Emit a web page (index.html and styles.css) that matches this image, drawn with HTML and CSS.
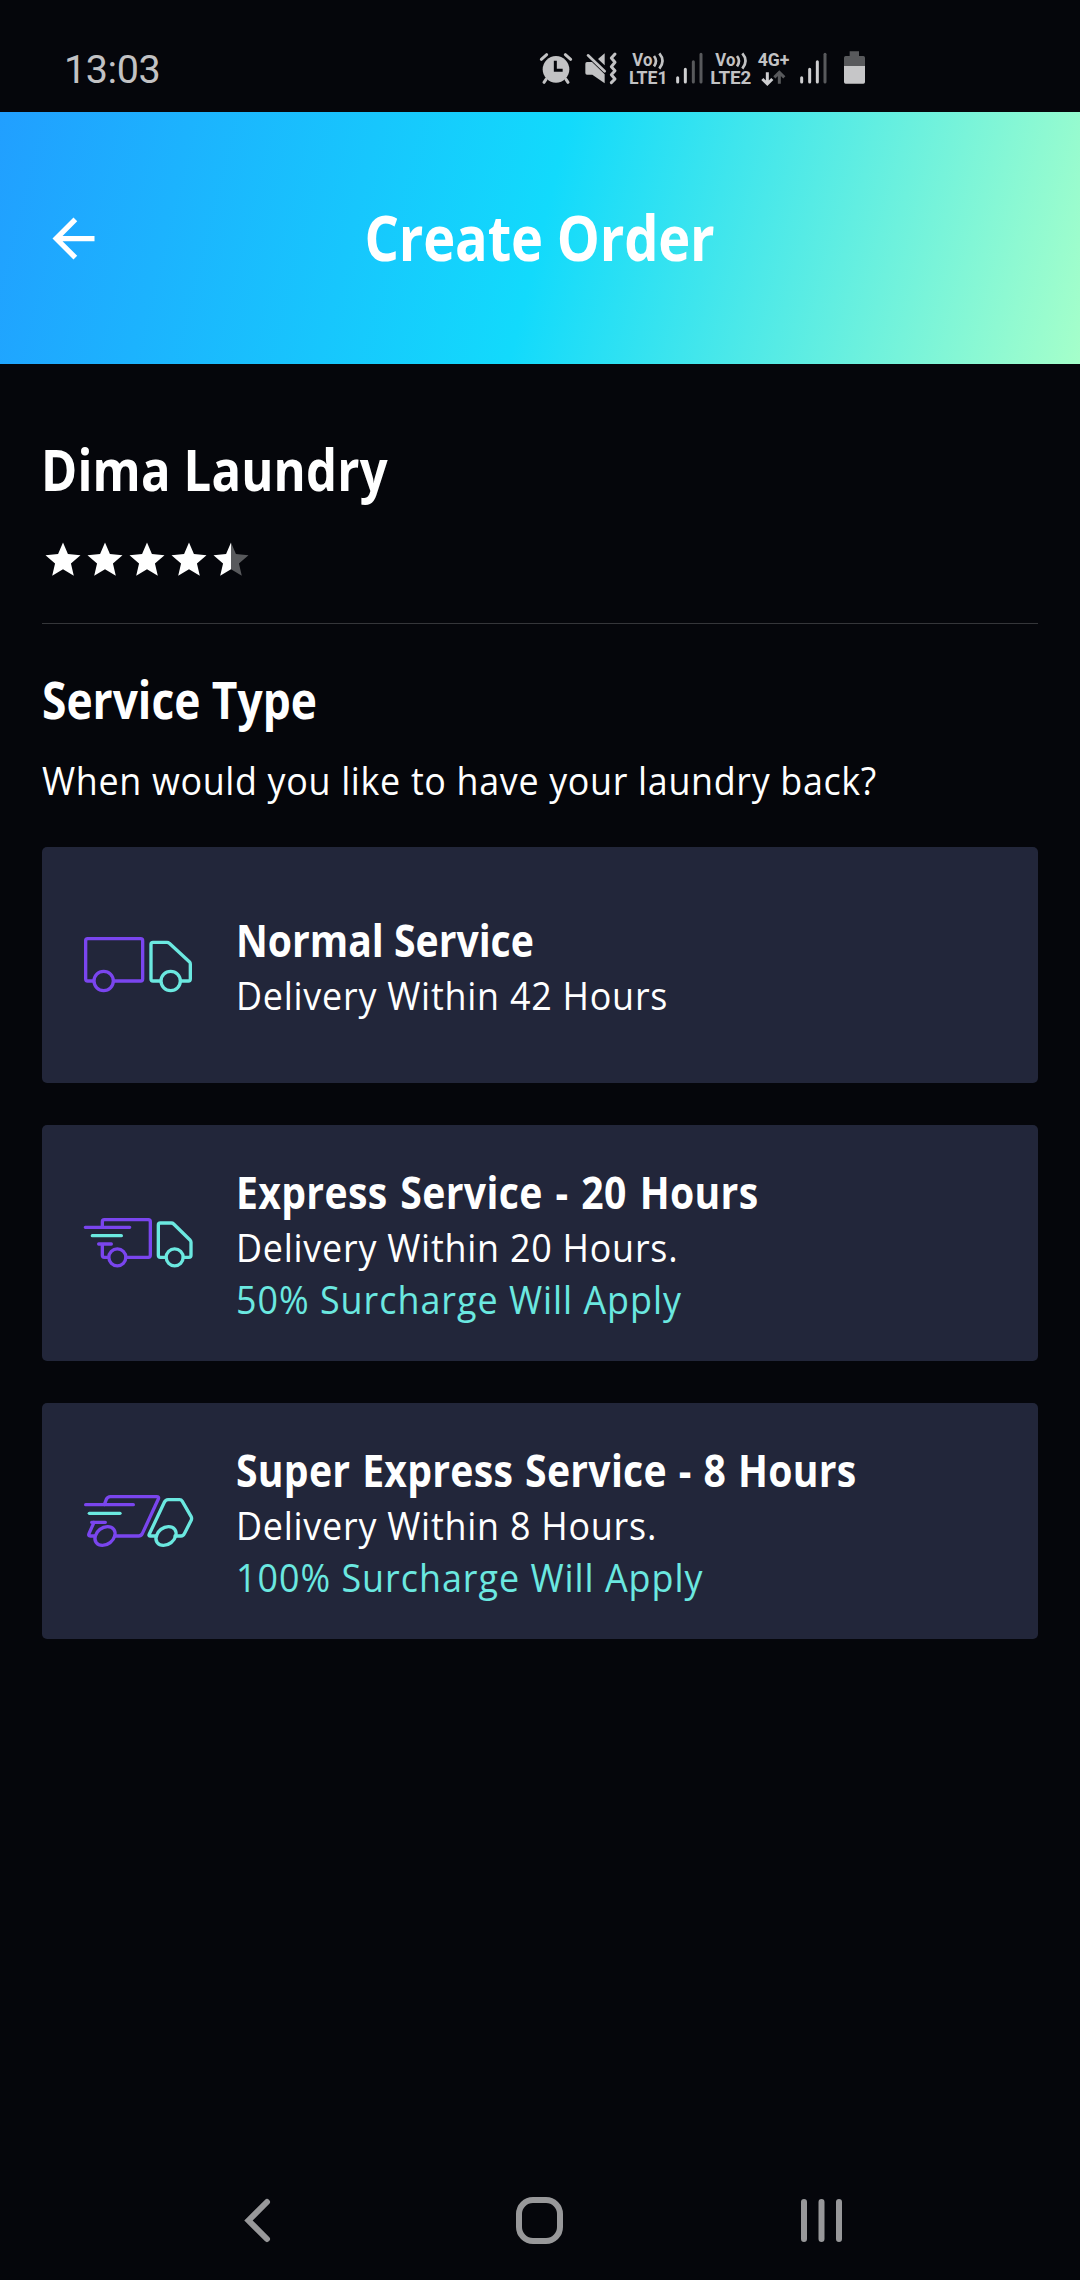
FILE: index.html
```html
<!DOCTYPE html>
<html lang="en">
<head>
<meta charset="utf-8">
<title>Create Order</title>
<link rel="stylesheet" href="styles.css">
</head>
<body>
<div class="screen">
  <div class="status-bar">
    <span class="clock">13:03</span>
    <svg class="status-icons" viewBox="0 0 1080 180">
      <!-- alarm -->
      <g fill="#c2c2c4" stroke="#c2c2c4" stroke-linecap="round">
        <circle cx="108" cy="88" r="40" stroke="none"/>
        <path d="M64 58 80 44M152 58 136 44" stroke-width="9"/>
        <path d="M78 118 72 127M138 118 144 127" stroke-width="9"/>
        <path d="M106 62V91H128" fill="none" stroke="#05060b" stroke-width="9" stroke-linecap="butt"/>
      </g>
      <!-- mute and vibrate -->
      <g fill="#c2c2c4">
        <path d="M201 66H216L254 103V130L217 104H201Q196 104 196 99V71Q196 66 201 66Z"/>
        <path d="M254 40V76L234 57Z"/>
        <path d="M204 46 254 94" stroke="#c2c2c4" stroke-width="8" stroke-linecap="round"/>
        <path d="M285 42 274 54 285 67 274 80 285 92 274 104 285 117 274 128" fill="none" stroke="#c2c2c4" stroke-width="9" stroke-linejoin="round" stroke-linecap="round"/>
      </g>
      <g class="net-label" fill="#c2c2c4">
        <text x="337" y="79" textLength="60" lengthAdjust="spacingAndGlyphs">Vo</text>
        <text x="327" y="131" textLength="116" lengthAdjust="spacingAndGlyphs">LTE1</text>
        <text x="586" y="79" textLength="60" lengthAdjust="spacingAndGlyphs">Vo</text>
        <text x="571" y="131" textLength="123" lengthAdjust="spacingAndGlyphs">LTE2</text>
        <text x="713" y="79" textLength="95" lengthAdjust="spacingAndGlyphs">4G+</text>
      </g>
      <g fill="none" stroke="#c2c2c4" stroke-width="8">
        <path d="M402 48Q414 63 402 79M418 40Q437 62 418 86"/>
        <path d="M651 48Q663 63 651 79M667 40Q686 62 667 86"/>
      </g>
      <!-- signal strength -->
      <g stroke-width="9" stroke-linecap="round" stroke="#cfcfd1">
        <path d="M473 113V126M496 88V126"/>
        <path d="M520 65V126M543 43V126" stroke="#58595c"/>
        <path d="M845 113V126M869 88V126M892 65V126"/>
        <path d="M915 43V126" stroke="#58595c"/>
      </g>
      <g fill="none" stroke-width="9">
        <path d="M778 131V98M763 112 778 97 793 112" stroke="#58595c"/>
        <path d="M742 97V131M727 117 742 132 757 117" stroke="#cfcfd1"/>
      </g>
      <!-- battery -->
      <path d="M989 34H1017V48H1030Q1035 48 1035 53V79H972V53Q972 48 977 48H989Z" fill="#58595c"/>
      <path d="M972 78H1035V126Q1035 131 1030 131H977Q972 131 972 126Z" fill="#c6c6c8"/>
    </svg>
  </div>

  <header class="app-bar">
    <svg class="back" viewBox="0 0 24 24"><path d="M20 11H7.83l5.59-5.59L12 4l-8 8 8 8 1.41-1.41L7.83 13H20v-2z" fill="#fff"/></svg>
    <h1 class="app-title"><span class="bold">Create Order</span></h1>
  </header>

  <main class="content">
    <h2 class="shop bold">Dima Laundry</h2>
    <div class="rating">
      <svg viewBox="0 0 24 24"><path d="M12 17.27 18.18 21l-1.64-7.03L22 9.24l-7.19-.61L12 2 9.19 8.63 2 9.24l5.46 4.73L5.82 21z"/></svg>
      <svg viewBox="0 0 24 24"><path d="M12 17.27 18.18 21l-1.64-7.03L22 9.24l-7.19-.61L12 2 9.19 8.63 2 9.24l5.46 4.73L5.82 21z"/></svg>
      <svg viewBox="0 0 24 24"><path d="M12 17.27 18.18 21l-1.64-7.03L22 9.24l-7.19-.61L12 2 9.19 8.63 2 9.24l5.46 4.73L5.82 21z"/></svg>
      <svg viewBox="0 0 24 24"><path d="M12 17.27 18.18 21l-1.64-7.03L22 9.24l-7.19-.61L12 2 9.19 8.63 2 9.24l5.46 4.73L5.82 21z"/></svg>
      <svg viewBox="0 0 24 24"><path d="M12 2 9.19 8.63 2 9.24l5.46 4.73L5.82 21 12 17.27z"/><path class="dim" d="M12 17.27 18.18 21l-1.64-7.03L22 9.24l-7.19-.61L12 2z"/></svg>
    </div>
    <h3 class="section bold">Service Type</h3>
    <p class="lead regular">When would you like to have your laundry back?</p>

    <div class="services">
      <div class="card">
        <svg class="truck" viewBox="0 0 420 330">
          <g stroke="#7a45ee">
            <path d="M70 213H53Q47 213 47 207V92Q47 86 53 86H212Q218 86 218 92V207Q218 213 212 213H132"/>
            <circle cx="101" cy="213" r="29"/>
          </g>
          <g stroke="#6be8e0">
            <path d="M271 213H249Q243 213 243 207V103Q243 97 249 97H291Q295 97 298 100L358 155Q361 158 361 162V207Q361 213 355 213H333"/>
            <circle cx="302" cy="213" r="29"/>
          </g>
        </svg>
        <div class="info">
          <div class="name bold">Normal Service</div>
          <div class="detail regular">Delivery Within 42 Hours</div>
        </div>
      </div>
      <div class="card">
        <svg class="truck" viewBox="0 -6 420 330">
          <g stroke="#7a45ee">
            <path d="M97 112V95Q97 89 103 89H235Q241 89 241 95V196Q241 202 235 202H168M115 202H103Q97 202 97 196V162M46 112H179M86 162H124"/>
            <circle cx="142" cy="202" r="25.500"/>
          </g>
          <g stroke="#6be8e0">
            <path d="M67 137H154"/>
            <path d="M287 202H271Q265 202 265 196V105Q265 99 271 99H304Q308 99 311 102L360 150Q363 153 363 157V196Q363 202 357 202H340"/>
            <circle cx="314" cy="202" r="25.500"/>
          </g>
        </svg>
        <div class="info">
          <div class="name bold name-express">Express Service - 20 Hours</div>
          <div class="detail regular">Delivery Within 20 Hours.</div>
          <div class="surcharge regular">50% Surcharge Will Apply</div>
        </div>
      </div>
      <div class="card">
        <svg class="truck" viewBox="0 -12 420 330">
          <g stroke="#7a45ee">
            <path d="M103 104 109 88Q113 80 121 80H260Q268 80 265 87L217 191Q213 198 206 198H134M75 198H61Q54 198 57 191L72 157M47 104H190M65 157H106"/>
            <ellipse cx="105" cy="198" rx="33" ry="25" transform="rotate(-38 105 198)"/>
          </g>
          <g stroke="#6be8e0">
            <path d="M58 130H150"/>
            <path d="M260 198H240Q235 198 238 192L283 97Q287 89 294 89H329Q334 89 337 94L363 139Q366 145 364 150L343 191Q340 198 333 198H315"/>
            <ellipse cx="288" cy="198" rx="33" ry="25" transform="rotate(-38 288 198)"/>
          </g>
        </svg>
        <div class="info">
          <div class="name bold name-super">Super Express Service - 8 Hours</div>
          <div class="detail regular">Delivery Within 8 Hours.</div>
          <div class="surcharge regular">100% Surcharge Will Apply</div>
        </div>
      </div>
    </div>
  </main>

  <nav class="nav-bar">
    <svg viewBox="0 0 60 60"><path d="M39 12 20.500 30.500 39 49"/></svg>
    <svg viewBox="0 0 60 60"><rect x="9" y="10" width="41" height="41" rx="14"/></svg>
    <svg viewBox="0 0 60 60"><path d="M12 12V49M29.500 12V49M47 12V49"/></svg>
  </nav>
</div>
</body>
</html>
```
FILE: styles.css
```css
* {
  box-sizing: border-box;
  margin: 0;
  padding: 0;
}

body {
  background: #05060b;
  color: #fff;
  font-family: "Open Sans", "Noto Sans", sans-serif;
}

svg {
  display: block;
  flex: none;
}

.screen {
  width: 1080px;
  height: 2280px;
  display: flex;
  flex-direction: column;
}

/* Narrowed faces: headings and body copy */
.bold {
  font-weight: 700;
  transform: scaleX(0.86);
  transform-origin: left;
  white-space: nowrap;
}

.regular {
  font-size: 39px;
  font-weight: 400;
  letter-spacing: 0.83px;
  transform: scaleX(0.92);
  transform-origin: left;
  white-space: nowrap;
}

.status-bar {
  height: 112px;
  padding: 27px 200px 0 64px;
  display: flex;
  justify-content: space-between;
  align-items: center;
  flex: none;
}

.clock {
  font: 400 39.5px/60px Roboto, sans-serif;
  letter-spacing: -0.4px;
  color: #c2c2c4;
}

.status-icons {
  width: 360px;
  height: 60px;
}

.net-label {
  font: 700 53px Roboto, sans-serif;
}

.app-bar {
  height: 252px;
  padding: 0 42px;
  display: grid;
  grid-template-columns: 63px 1fr 63px;
  align-items: center;
  background: linear-gradient(104deg, #219fff 0%, #12dafc 50%, #a5ffca 100%);
  flex: none;
}

.back {
  width: 63px;
  height: 63px;
}

.app-title {
  font-size: 63px;
  line-height: 80px;
  padding-bottom: 2px;
  text-align: center;
}

.app-title .bold {
  display: inline-block;
  transform-origin: center;
  letter-spacing: -0.2px;
}

.content {
  flex: 1;
  padding: 65px 42px 0;
}

.shop {
  font-size: 57px;
  line-height: 80px;
  margin-left: -1px;
  letter-spacing: 0.2px;
}

.rating {
  display: flex;
  height: 115px;
  padding-top: 30px;
  border-bottom: 1px solid #35363a;
}

.rating svg {
  width: 42px;
  height: 42px;
  fill: #fff;
}

.rating .dim {
  fill: #58595c;
}

.section {
  font-size: 51.5px;
  line-height: 70px;
  margin-top: 40px;
}

.lead {
  line-height: 52px;
  margin-top: 20px;
  letter-spacing: 0.72px;
}

.services {
  margin-top: 41px;
  display: flex;
  flex-direction: column;
  gap: 42px;
}

.card {
  height: 236px;
  padding-left: 28px;
  display: flex;
  align-items: center;
  gap: 26px;
  background: #22263a;
  border-radius: 5px;
}

.truck {
  width: 140px;
  height: 110px;
  fill: none;
  stroke-width: 10;
  stroke-linejoin: round;
  stroke-linecap: round;
}

.info {
  padding-top: 2px;
}

.name {
  font-size: 45.5px;
  line-height: 56px;
  margin-bottom: 2px;
}

.name-express {
  word-spacing: 2.75px;
  letter-spacing: 0.4px;
}

.name-super {
  word-spacing: 1.6px;
  letter-spacing: 0.33px;
}

.detail,
.surcharge {
  line-height: 52px;
}

.surcharge {
  color: #6be8e0;
  letter-spacing: 1.07px;
}

.nav-bar {
  height: 120px;
  padding: 0 228px;
  display: flex;
  align-items: center;
  justify-content: space-between;
  flex: none;
}

.nav-bar svg {
  width: 60px;
  height: 60px;
  fill: none;
  stroke: #98989a;
  stroke-width: 6;
  stroke-linecap: round;
}
```
